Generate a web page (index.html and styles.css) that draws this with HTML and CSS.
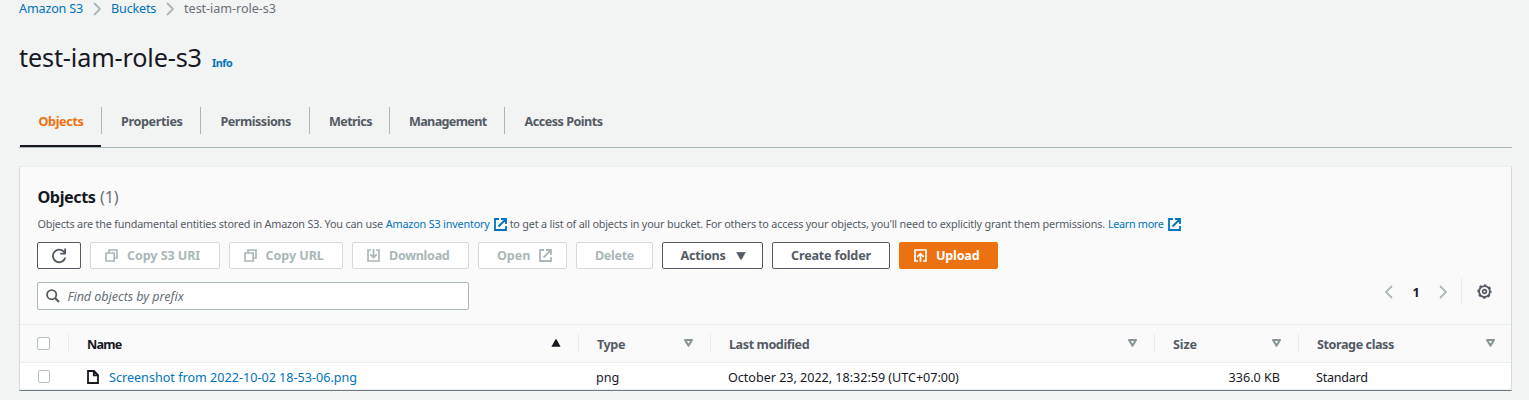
FILE: index.html
```
<!DOCTYPE html>
<html lang="en">
<head>
<meta charset="utf-8">
<title>test-iam-role-s3 - S3 bucket</title>
<link rel="stylesheet" href="styles.css">
</head>
<body>
<svg class="defs" width="0" height="0">
  <symbol id="external" viewBox="0 0 13 13"><path d="M5 1H1V12H12V8M7 1H12V6M12 1L4.5 8.5" fill="none" stroke="currentColor" stroke-width="1.8"/></symbol>
  <symbol id="copy" viewBox="0 0 13 13"><path d="M1 4H9.2V12H1ZM4 4V1H12V9H9.2" fill="none" stroke="currentColor" stroke-width="1.7"/></symbol>
  <symbol id="chevron" viewBox="0 0 8 14"><path d="M1 1L7 7L1 13" fill="none" stroke="currentColor" stroke-width="1.8"/></symbol>
  <symbol id="sort" viewBox="0 0 9 8"><path d="M1 1H8L4.5 6.6Z" fill="none" stroke="currentColor" stroke-width="2" stroke-linejoin="round"/></symbol>
</svg>
<main class="page">
  <nav class="breadcrumbs">
    <a class="crumb crumb-service">Amazon S3</a><svg class="crumb-arrow"><use href="#chevron"/></svg>
    <a class="crumb crumb-buckets">Buckets</a><svg class="crumb-arrow"><use href="#chevron"/></svg>
    <span class="crumb crumb-current">test-iam-role-s3</span>
  </nav>
  <header class="title-row"><h1 class="title">test-iam-role-s3</h1><a class="info">Info</a></header>
  <nav class="tabs">
    <a class="tab tab-objects">Objects</a>
    <a class="tab tab-properties">Properties</a>
    <a class="tab tab-permissions">Permissions</a>
    <a class="tab tab-metrics">Metrics</a>
    <a class="tab tab-management">Management</a>
    <a class="tab tab-access">Access Points</a>
  </nav>
  <section class="panel">
    <h2 class="heading"><span>Objects</span><span class="count">(1)</span></h2>
    <p class="description"><span class="desc-a">Objects are the fundamental entities stored in Amazon S3. You can use</span><a class="desc-link">Amazon S3 inventory</a><svg class="icon desc-icon"><use href="#external"/></svg><span class="desc-b">to get a list of all objects in your bucket. For others to access your objects, you'll need to explicitly grant them permissions.</span><a class="desc-more">Learn more</a><svg class="icon desc-icon"><use href="#external"/></svg></p>
    <div class="actions">
      <button class="btn btn-refresh" aria-label="Refresh"><svg class="refresh" viewBox="0 0 16 16"><path d="M14.3 9.6A6.3 6.3 0 1 1 12.8 3.6L14 5M14.1 .5V5.6H9.2" fill="none" stroke="currentColor" stroke-width="1.8"/></svg></button>
      <button class="btn btn-off btn-uri"><svg class="icon"><use href="#copy"/></svg><span>Copy S3 URI</span></button>
      <button class="btn btn-off btn-url"><svg class="icon"><use href="#copy"/></svg><span>Copy URL</span></button>
      <button class="btn btn-off btn-download"><svg class="icon" viewBox="0 0 13 13"><path d="M4 1H1V12H12V1H9M6.5 0V8.5M3.3 5.4L6.5 8.6L9.7 5.4" fill="none" stroke="currentColor" stroke-width="1.7"/></svg><span>Download</span></button>
      <button class="btn btn-off btn-open"><span>Open</span><svg class="icon"><use href="#external"/></svg></button>
      <button class="btn btn-off btn-delete"><span>Delete</span></button>
      <button class="btn btn-actions"><span>Actions</span><svg class="caret" viewBox="0 0 10 8"><path d="M.6 .3H9.4L5.5 7.3H4.5Z" fill="currentColor" stroke="currentColor" stroke-width=".6" stroke-linejoin="round"/></svg></button>
      <button class="btn btn-create"><span>Create folder</span></button>
      <button class="btn btn-upload"><svg class="icon" viewBox="0 0 13 13"><path d="M4 12H1V1H12V12H9M6.5 13V4.8M3.3 7.8L6.5 4.6L9.7 7.8" fill="none" stroke="currentColor" stroke-width="1.7"/></svg><span>Upload</span></button>
    </div>
    <div class="filter-row">
      <div class="search"><svg class="search-icon" viewBox="0 0 14 14"><circle cx="5.7" cy="5.7" r="4.6" fill="none" stroke="currentColor" stroke-width="1.8"/><path d="M9 9L13 13" stroke="currentColor" stroke-width="2.1"/></svg><span class="placeholder">Find objects by prefix</span></div>
      <div class="pager"><svg class="page-arrow previous"><use href="#chevron"/></svg><b class="page-number">1</b><svg class="page-arrow"><use href="#chevron"/></svg><span class="pager-line"></span>
        <svg class="gear" viewBox="0 0 16 16"><circle cx="8" cy="8" r="5.8" fill="none" stroke="currentColor" stroke-width="2"/><circle cx="8" cy="8" r="6.9" fill="none" stroke="currentColor" stroke-width="1.5" stroke-dasharray="2.71 2.71" stroke-dashoffset="1.35"/><circle cx="8" cy="8" r="2" fill="none" stroke="currentColor" stroke-width="1.8"/></svg>
      </div>
    </div>
    <div class="grid grid-head">
      <div class="cell cell-check"><span class="check"></span></div>
      <div class="cell cell-sorted"><span class="h-name">Name</span><svg class="sort" viewBox="0 0 10 8"><path d="M4.5 .3H5.5L9.6 7.7H.4Z" fill="currentColor"/></svg></div>
      <div class="cell"><span class="h-type">Type</span><svg class="sort"><use href="#sort"/></svg></div>
      <div class="cell"><span class="h-modified">Last modified</span><svg class="sort"><use href="#sort"/></svg></div>
      <div class="cell"><span class="h-size">Size</span><svg class="sort"><use href="#sort"/></svg></div>
      <div class="cell"><span class="h-class">Storage class</span><svg class="sort"><use href="#sort"/></svg></div>
    </div>
    <div class="grid grid-row">
      <div class="cell cell-check"><span class="check"></span></div>
      <div class="cell cell-name"><svg class="file" viewBox="0 0 12 14"><path d="M1 1H7L11 5V13H1ZM6.8 1V5.3H11" fill="none" stroke="currentColor" stroke-width="1.8"/></svg><a class="file-name">Screenshot from 2022-10-02 18-53-06.png</a></div>
      <div class="cell"><span>png</span></div>
      <div class="cell"><span class="date">October 23, 2022, 18:32:59 (UTC+07:00)</span></div>
      <div class="cell cell-size"><span class="size">336.0 KB</span></div>
      <div class="cell"><span class="standard">Standard</span></div>
    </div>
  </section>
</main>
</body>
</html>
```
FILE: styles.css
```
* { box-sizing: border-box; }
body { margin: 0; background: #f2f3f3; color: #16191f; font: 12.6px/18px "Noto Sans", sans-serif; overflow: hidden; white-space: nowrap; }
.defs { position: absolute; }
svg { flex: none; display: block; }
a { color: #0073bb; }
.page { height: 400px; padding: 0 17px 0 19px; }
.breadcrumbs { display: flex; align-items: center; height: 17px; letter-spacing: -.2px; }
.crumb-service { letter-spacing: -.17px; }
.crumb-current { color: #687078; letter-spacing: -.06px; }
.crumb-arrow { width: 8px; height: 14px; margin: 0 10px; color: #aab7b8; }
.title-row { display: flex; align-items: baseline; height: 90px; padding-top: 24px; }
.title { margin: 0; font-size: 25.2px; line-height: 32px; font-weight: 400; letter-spacing: -.15px; }
.info { margin-left: 10px; font-size: 10.8px; font-weight: 700; letter-spacing: -.4px; }
.tabs { display: flex; height: 41px; border-bottom: 1px solid #aab7b8; letter-spacing: -.5px; }
.tab { height: 27px; padding: 6px 0 0 19.5px; border-right: 1px solid #aab7b8; color: #545b64; font-weight: 700; line-height: 18px; }
.tab:last-child { border: 0; }
.tab-objects { position: relative; width: 83px; letter-spacing: -.35px; color: #ec7211; }
.tab-objects::after { content: ""; position: absolute; left: 1px; right: 0; bottom: -13px; height: 2px; background: #16191f; }
.tab-properties { width: 99px; padding-left: 19px; letter-spacing: -.37px; } .tab-permissions { width: 109px; } .tab-metrics { width: 80px; padding-left: 19px; letter-spacing: -.6px; } .tab-management { width: 115px; padding-left: 19px; letter-spacing: -.66px; }
.panel { height: 225px; margin-top: 18px; background: #fafafa; border: 1px solid #d5dbdb; border-top-color: #eaeded; border-bottom-color: #6f7b81; }
.heading { display: flex; gap: 4.5px; margin: 0; padding: 20px 17px 0 17.5px; font-size: 16.2px; line-height: 20px; letter-spacing: -.45px; }
.count { font-weight: 400; letter-spacing: -.1px; color: #687078; }
.description { display: flex; align-items: center; height: 18px; margin: 8px 17px 0 17.5px; color: #545b64; font-size: 10.8px; letter-spacing: -.175px; }
.desc-a { letter-spacing: -.182px; }
.icon { width: 13px; height: 13px; }
.desc-link, .desc-more { margin-left: 3px; }
.desc-more { letter-spacing: -.3px; }
.desc-icon { margin: 0 3px 0 4px; color: #0073bb; }
.actions { display: flex; gap: 9px; margin: 9px 17px 0; }
.btn { display: flex; align-items: center; justify-content: center; height: 27px; padding: 0; border: 1px solid #545b64; border-radius: 2px; background: #fff; color: #545b64; font: 700 12.6px/18px "Noto Sans", sans-serif; letter-spacing: -.2px; }
.btn-off { border-color: #d5dbdb; color: #aab7b8; }
.btn-refresh { width: 44px; } .refresh { width: 16px; height: 16px; }
.btn-uri, .btn-url, .btn-download, .btn-upload { justify-content: flex-start; gap: 9px; padding-left: 14px; }
.btn-uri { width: 130px; letter-spacing: -.1px; } .btn-url { width: 114px; gap: 8.5px; letter-spacing: -.08px; } .btn-download { width: 117px; letter-spacing: -.3px; }
.btn-open { width: 89px; gap: 9px; justify-content: flex-start; padding-left: 18px; letter-spacing: -.1px; }
.btn-delete { width: 77px; letter-spacing: -.3px; } .btn-actions { width: 101px; gap: 10px; padding-left: 1px; letter-spacing: -.25px; } .caret { width: 10px; height: 8px; } .btn-create { width: 118px; }
.btn-upload { width: 99px; border-color: #ec7211; background: #ec7211; color: #fff; }
.filter-row { display: flex; justify-content: space-between; height: 42px; margin: 13px 17px 0; }
.search { display: flex; align-items: center; width: 432px; height: 28px; padding: 1px 0 0 8px; gap: 7.5px; border: 1px solid #aab7b8; border-radius: 2px; background: #fff; color: #687078; font-style: italic; letter-spacing: -.06px; }
.search-icon { width: 14px; height: 14px; margin-top: -1px; color: #545b64; }
.pager { display: flex; align-items: center; height: 27px; margin: -4px 2px 0 0; }
.page-arrow { width: 8px; height: 14px; color: #aab7b8; }
.previous { transform: scaleX(-1); }
.page-number { width: 46px; padding-top: 2px; text-align: center; }
.pager-line { width: 1px; height: 27px; margin: 0 15px 0 14px; background: #eaeded; }
.gear { width: 15px; height: 15px; color: #545b64; }
.grid { display: grid; grid-template-columns: 49px 510px 132px 444px 144px 1fr; }
.grid-head { height: 39px; border: solid #eaeded; border-width: 1px 0; color: #545b64; font-weight: 700; letter-spacing: -.42px; }
.grid-head .cell { display: flex; justify-content: space-between; align-items: center; height: 19px; margin-top: 9px; padding: 2px 17px 0 18px; border-right: 1px solid #eaeded; }
.grid-head .cell:last-child { border: 0; padding-right: 16px; }
.grid-head .cell-sorted { color: #16191f; letter-spacing: -.8px; }
.h-size { letter-spacing: -.15px; }
.grid .cell-check { padding: 0 0 0 17px; }
.check { width: 13px; height: 13px; border: 1px solid #b5c0c1; border-radius: 2px; background: #fff; }
.sort { width: 9px; height: 8px; margin-bottom: 3px; color: #879596; }
.cell-sorted .sort { width: 10px; color: #16191f; }
.grid-row { height: 27px; background: #fff; border-bottom: 1px solid #eaeded; }
.grid-row .cell { display: flex; align-items: center; height: 26px; padding: 3px 19px 0 17px; }
.grid-row .cell-name { padding-left: 18px; }
.grid-row .cell-check { padding-top: 0; padding-left: 18px; }
.grid-row .cell-size { justify-content: flex-end; }
.date { letter-spacing: -.03px; }
.standard { letter-spacing: -.25px; }
.file { width: 12px; height: 14px; margin: -2px 10px 0 0; }
```
